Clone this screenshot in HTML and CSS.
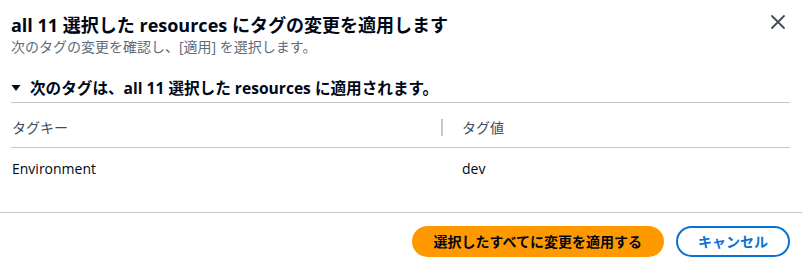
FILE: index.html
```html
<!DOCTYPE html>
<html lang="ja">
<head>
<meta charset="utf-8">
<link rel="stylesheet" href="styles.css">
</head>
<body>
<div class="modal">
  <div class="header">
    <div class="titles">
      <h2 class="title">all 11 選択した resources にタグの変更を適用します</h2>
      <p class="subtitle">次のタグの変更を確認し、[適用] を選択します。</p>
    </div>
    <button class="close" aria-label="閉じる">
      <svg width="16" height="16" viewBox="0 0 16 16"><path d="M2 2l12 12M14 2L2 14" stroke="#414d5c" stroke-width="1.8" fill="none" stroke-linecap="round"/></svg>
    </button>
  </div>
  <div class="content">
    <div class="section-head">
      <svg class="caret" width="10" height="10" viewBox="0 0 10 10"><polygon points="0.5,2 9.5,2 5,8" fill="#000716"/></svg>
      <span>次のタグは、all 11 選択した resources に適用されます。</span>
    </div>
    <div class="table">
      <div class="th c1">タグキー</div>
      <div class="th c2"><span class="divider"></span><span>タグ値</span></div>
      <div class="td c1">Environment</div>
      <div class="td c2">dev</div>
    </div>
  </div>
  <div class="footer">
    <button class="btn primary">選択したすべてに変更を適用する</button>
    <button class="btn normal">キャンセル</button>
  </div>
</div>
</body>
</html>
```
FILE: styles.css
```css
* { box-sizing: border-box; }
html, body { margin: 0; padding: 0; background: #fff; }
body {
  font-family: "Open Sans", "Noto Sans CJK JP", sans-serif;
  color: #000716;
  width: 802px;
  height: 274px;
  overflow: hidden;
}
.modal { display: flex; flex-direction: column; }
.header {
  display: flex;
  justify-content: space-between;
  align-items: flex-start;
  padding: 14px 16px 0 11px;
}
.title {
  margin: 0;
  font-size: 18px;
  line-height: 22px;
  font-weight: 700;
  color: #000716;
}
.subtitle {
  margin: 1px 0 0;
  font-size: 14px;
  line-height: 20px;
  color: #5f6b7a;
}
.close {
  border: 0;
  background: none;
  padding: 0;
  margin: 0;
  width: 16px;
  height: 16px;
  display: block;
}
.close svg { display: block; }
.content { padding: 20px 12px 0 11px; }
.section-head {
  display: flex;
  align-items: center;
  gap: 9px;
  font-size: 15.6px;
  line-height: 22px;
  font-weight: 700;
  padding-bottom: 3px;
  border-bottom: 1px solid #c6c6cd;
}
.caret { display: block; flex: none; }
.table {
  display: grid;
  grid-template-columns: 430px 1fr;
}
.th {
  font-size: 14px;
  line-height: 20px;
  color: #414d5c;
  height: 45px;
  display: flex;
  align-items: center;
  border-bottom: 1px solid #c6c6cd;
  padding-top: 5px;
}
.td {
  font-size: 14px;
  line-height: 20px;
  color: #000716;
  height: 64px;
  display: flex;
  align-items: center;
  padding-bottom: 22px;
}
.c1 { padding-left: 1px; }
.th.c2 { gap: 19px; }
.td.c2 { padding-left: 21px; }
.divider {
  width: 2px;
  height: 17px;
  background: #c6c6cd;
  display: block;
}
.footer {
  border-top: 1px solid #c6c6cd;
  display: flex;
  justify-content: flex-end;
  gap: 12px;
  padding: 13px 12px 0 0;
}
.btn {
  font-family: "Open Sans", "Noto Sans CJK JP", sans-serif;
  font-size: 14px;
  line-height: 19px;
  font-weight: 700;
  padding: 4px 20px;
  border-radius: 20px;
  border: 2px solid transparent;
}
.primary { background: #ff9900; color: #000716; border-color: #ff9900; }
.normal { background: #fff; color: #0972d3; border-color: #0972d3; }
```
